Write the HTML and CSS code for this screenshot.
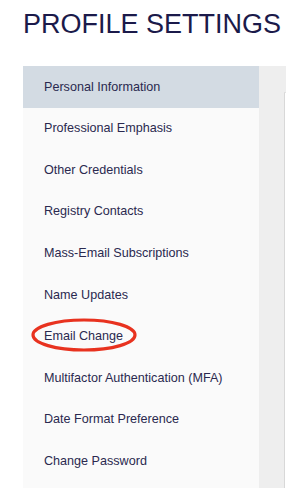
FILE: index.html
```html
<!DOCTYPE html>
<html>
<head>
<meta charset="utf-8">
<link rel="stylesheet" href="styles.css">
</head>
<body>
<h1 class="title">PROFILE SETTINGS</h1>
<div class="layout">
  <ul class="menu">
    <li class="item active">Personal Information</li>
    <li class="item">Professional Emphasis</li>
    <li class="item">Other Credentials</li>
    <li class="item">Registry Contacts</li>
    <li class="item">Mass-Email Subscriptions</li>
    <li class="item">Name Updates</li>
    <li class="item marked">Email Change
      <svg class="ring" width="106" height="34" viewBox="0 0 106 34"><ellipse cx="53" cy="17" rx="51" ry="15" fill="none" stroke="#e8321f" stroke-width="3.2"/></svg>
    </li>
    <li class="item">Multifactor Authentication (MFA)</li>
    <li class="item">Date Format Preference</li>
    <li class="item">Change Password</li>
  </ul>
  <div class="panel">
    <div class="card"></div>
  </div>
</div>
</body>
</html>
```
FILE: styles.css
```css
html, body {
  margin: 0;
  padding: 0;
  background: #ffffff;
  height: 100%;
}
body {
  font-family: "Liberation Sans", Arial, sans-serif;
  overflow: hidden;
}
.title {
  margin: 8px 0 26px 23px;
  font-size: 27px;
  line-height: 32px;
  font-weight: normal;
  color: #1b1a4a;
  white-space: nowrap;
}
.layout {
  display: flex;
  margin-left: 23px;
  height: 430px;
}
.menu {
  list-style: none;
  margin: 0;
  padding: 0;
  width: 236px;
  background: #fafafa;
  flex-shrink: 0;
}
.item {
  height: 41.55px;
  display: flex;
  align-items: center;
  padding-left: 21px;
  font-size: 12.6px;
  color: #2a294f;
  position: relative;
  white-space: nowrap;
}
.item.active {
  background: #d3dbe3;
}
.ring {
  position: absolute;
  left: 8px;
  top: 3px;
}
.panel {
  flex: 1;
  background: #eeeeee;
  padding: 26px 0 0 25px;
}
.card {
  background: #ffffff;
  border-left: 1px solid #d8d8d8;
  border-top: 1px solid #e2e2e2;
  height: 100%;
}
```
